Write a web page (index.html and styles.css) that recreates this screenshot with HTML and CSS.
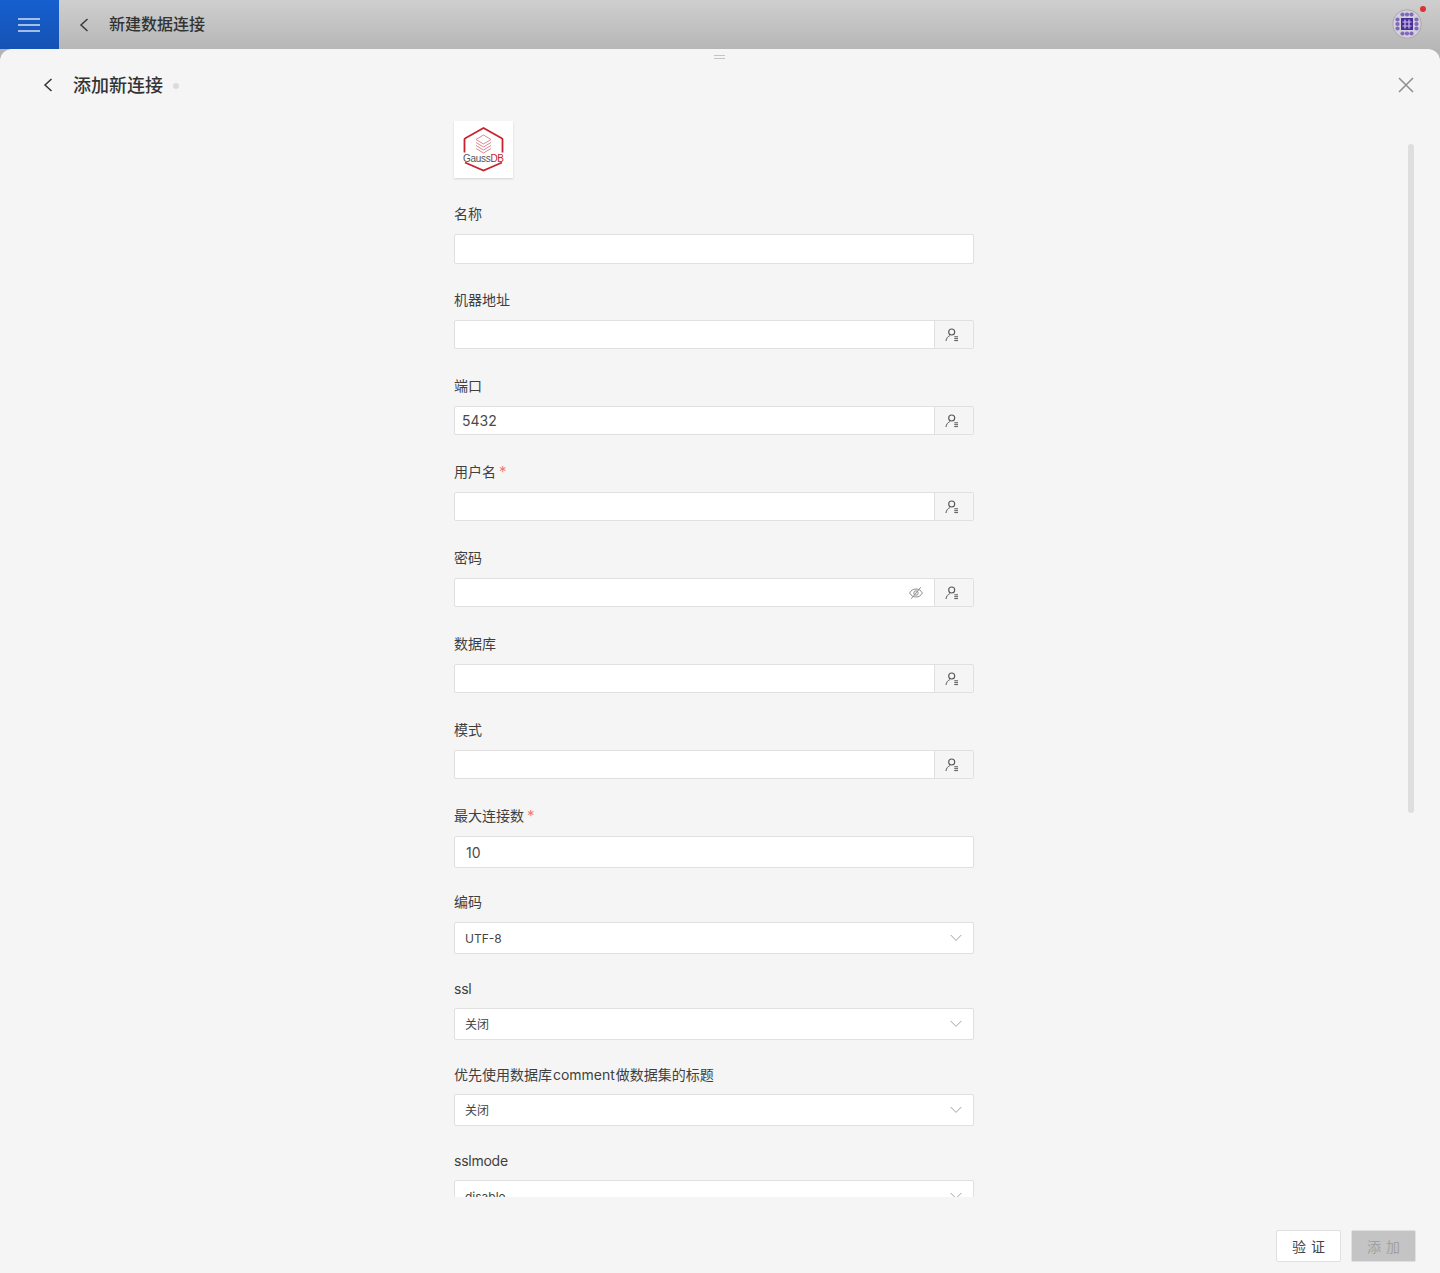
FILE: index.html
```html
<!DOCTYPE html>
<html lang="zh">
<head>
<meta charset="utf-8">
<title>添加新连接</title>
<link rel="stylesheet" href="styles.css">
</head>
<body>
<svg class="defs" width="0" height="0">
  <symbol id="user" viewBox="0 0 14 14">
    <circle cx="6.700" cy="4" r="3" fill="none" stroke="currentColor" stroke-width="1.100"/>
    <path d="M1 13c.3-2.600 1.700-4.500 3.900-5.400M9.300 8.800h3.700M9.300 10.700h3.700M9.300 12.600h3.700" fill="none" stroke="currentColor" stroke-width="1"/>
  </symbol>
  <symbol id="chev" viewBox="0 0 12 8">
    <path d="M.7 1l5.300 5.400L11.300 1" fill="none" stroke="currentColor" stroke-width="1"/>
  </symbol>
</svg>
<header class="topbar">
  <div class="menu-btn">
    <svg width="22" height="14" viewBox="0 0 22 14"><path d="M0 1h22M0 7h22M0 13h22" stroke="#d4dff2" stroke-width="1.500"/></svg>
  </div>
  <svg class="top-back" width="10" height="14" viewBox="0 0 10 14"><path d="M8.500 1L2 7l6.500 6" fill="none" stroke="#3a3a3a" stroke-width="1.500"/></svg>
  <div class="top-title">新建数据连接</div>
  <div class="avatar">
    <svg width="30" height="30" viewBox="0 0 30 30">
      <circle cx="15" cy="15" r="14.300" fill="#d2d1d8" stroke="#a9a9ad" stroke-width="1"/>
      <g fill="#8068bd">
        <circle cx="10.500" cy="5.500" r="2.100"/><circle cx="15" cy="5.500" r="2.100"/><circle cx="19.500" cy="5.500" r="2.100"/>
        <circle cx="10.500" cy="24.500" r="2.100"/><circle cx="15" cy="24.500" r="2.100"/><circle cx="19.500" cy="24.500" r="2.100"/>
        <circle cx="5.500" cy="10.500" r="2.100"/><circle cx="5.500" cy="15" r="2.100"/><circle cx="5.500" cy="19.500" r="2.100"/>
        <circle cx="24.500" cy="10.500" r="2.100"/><circle cx="24.500" cy="15" r="2.100"/><circle cx="24.500" cy="19.500" r="2.100"/>
      </g>
      <rect x="9" y="9" width="12" height="12" fill="#4a2f9c"/>
      <path d="M13 10.500v9M17 10.500v9M10.500 13h9M10.500 17h9" stroke="#c8bfe6" stroke-width="1.200"/>
    </svg>
    <span class="dot"></span>
  </div>
</header>
<main class="panel">
  <div class="handle"></div>
  <div class="panel-head">
    <svg class="head-back" width="10" height="14" viewBox="0 0 10 14"><path d="M8.500 1L2 7l6.500 6" fill="none" stroke="#333" stroke-width="1.500"/></svg>
    <h1 class="head-title">添加新连接</h1>
    <span class="head-dot"></span>
    <svg class="head-close" width="16" height="16" viewBox="0 0 16 16"><path d="M1 1l14 14M15 1L1 15" stroke="#8e8e8e" stroke-width="1.500"/></svg>
  </div>
  <div class="scroll-body">
    <form class="form">
      <div class="logo">
        <svg width="59" height="57" viewBox="0 0 59 57">
          <path d="M10.500 31.500V18.500a1.500 1.500 0 0 1 .8-1.300L29.500 7l18.200 10.200a1.500 1.500 0 0 1 .8 1.300V31.500" fill="none" stroke="#c8232c" stroke-width="1.800"/>
          <path d="M11 41.500L29.500 49.500 48 41.500" fill="none" stroke="#c8232c" stroke-width="1.800"/>
          <g fill="none" stroke="#de8a90" stroke-width="1">
            <path d="M29.500 14l7.500 4.500-7.500 4.500-7.500-4.500z"/>
            <path d="M22 21.500l7.500 4.500 7.500-4.500M22 24.500l7.500 4.500 7.500-4.500M22 27.500l7.500 4.500 7.500-4.500"/>
          </g>
          <text x="9" y="41" class="logo-gauss">Gauss<tspan class="logo-db">DB</tspan></text>
        </svg>
      </div>

      <div class="row"><label class="lbl">名称</label>
        <div class="field first"><input class="inp" type="text"></div></div>

      <div class="row"><label class="lbl">机器地址</label>
        <div class="field"><input class="inp" type="text"><span class="addon"><svg class="ico"><use href="#user"/></svg></span></div></div>

      <div class="row"><label class="lbl">端口</label>
        <div class="field"><input class="inp" type="text" value="5432"><span class="addon"><svg class="ico"><use href="#user"/></svg></span></div></div>

      <div class="row"><label class="lbl">用户名<span class="req">*</span></label>
        <div class="field"><input class="inp" type="text"><span class="addon"><svg class="ico"><use href="#user"/></svg></span></div></div>

      <div class="row"><label class="lbl">密码</label>
        <div class="field"><div class="inp pw">
          <svg width="14" height="14" viewBox="0 0 14 14"><path d="M.6 7C2 4.400 4.300 3 7 3s5 1.400 6.400 4C12 9.600 9.700 11 7 11S2 9.600.6 7z" fill="none" stroke="#8d8d8d"/><circle cx="7" cy="7" r="2.200" fill="none" stroke="#8d8d8d"/><path d="M2.300 12.700L11.700 1.300" stroke="#8d8d8d"/></svg>
        </div><span class="addon"><svg class="ico"><use href="#user"/></svg></span></div></div>

      <div class="row"><label class="lbl">数据库</label>
        <div class="field"><input class="inp" type="text"><span class="addon"><svg class="ico"><use href="#user"/></svg></span></div></div>

      <div class="row"><label class="lbl">模式</label>
        <div class="field"><input class="inp" type="text"><span class="addon"><svg class="ico"><use href="#user"/></svg></span></div></div>

      <div class="row"><label class="lbl">最大连接数<span class="req">*</span></label>
        <div class="field tall"><input class="inp num" type="text" value="10"></div></div>

      <div class="row"><label class="lbl">编码</label>
        <div class="select"><span>UTF-8</span><svg class="chev"><use href="#chev"/></svg></div></div>

      <div class="row"><label class="lbl latin tight">ssl</label>
        <div class="select"><span class="cjk">关闭</span><svg class="chev"><use href="#chev"/></svg></div></div>

      <div class="row"><label class="lbl latin spaced">优先使用数据库 comment 做数据集的标题</label>
        <div class="select"><span class="cjk">关闭</span><svg class="chev"><use href="#chev"/></svg></div></div>

      <div class="row"><label class="lbl latin tight">sslmode</label>
        <div class="select"><span>disable</span><svg class="chev"><use href="#chev"/></svg></div></div>
    </form>
    <div class="scrollbar"></div>
  </div>
  <footer class="foot">
    <button class="btn" type="button">验 证</button>
    <button class="btn disabled" type="button">添 加</button>
  </footer>
</main>
</body>
</html>
```
FILE: styles.css
```css
* { box-sizing: border-box; }
html, body { margin: 0; height: 100%; }
body {
  width: 1440px;
  height: 1273px;
  overflow: hidden;
  display: flex;
  flex-direction: column;
  background: #b4b4b4;
  color: #333;
  font-family: Inter, "Noto Sans CJK SC", sans-serif;
  font-size: 14px;
}
.defs { position: absolute; }

.topbar {
  height: 49px;
  flex: none;
  display: flex;
  align-items: center;
  background: linear-gradient(#cfcfcf, #b6b6b6);
}
.menu-btn {
  width: 59px;
  height: 49px;
  display: flex;
  align-items: center;
  justify-content: center;
  padding-right: 2px;
  background: linear-gradient(#155fcf, #1652b4);
}
.top-back { margin-left: 20px; }
.top-title {
  margin: 0 0 4px 20px;
  font-size: 16px;
  font-weight: 500;
  color: #333;
}
.avatar {
  position: relative;
  margin-left: auto;
  margin-right: 18px;
  width: 30px;
  height: 30px;
  margin-top: -2px;
}
.avatar svg { display: block; }
.dot {
  position: absolute;
  top: -3px;
  right: -4px;
  width: 6px;
  height: 6px;
  border-radius: 50%;
  background: #dc3232;
}

.panel {
  position: relative;
  flex: 1;
  min-height: 0;
  display: flex;
  flex-direction: column;
  background: #f5f5f5;
  border-radius: 12px 12px 0 0;
}
.handle {
  position: absolute;
  top: 6px;
  left: 714px;
  width: 11px;
  height: 4px;
  border-top: 1px solid #c4c4c4;
  border-bottom: 1px solid #c4c4c4;
}
.panel-head {
  height: 72px;
  flex: none;
  display: flex;
  align-items: center;
  padding: 0 26px 0 42px;
}
.head-back { margin-left: 1px; }
.head-title {
  margin: 0 0 2px 20px;
  font-size: 18px;
  font-weight: 500;
  color: #333;
}
.head-dot {
  margin-left: 10px;
  margin-top: 2px;
  width: 6px;
  height: 6px;
  border-radius: 50%;
  background: #dcdcdc;
}
.head-close { margin-left: auto; }

.scroll-body {
  position: relative;
  flex: 1;
  min-height: 0;
  overflow: hidden;
}
.scrollbar {
  position: absolute;
  top: 23px;
  right: 26px;
  width: 6px;
  height: 669px;
  border-radius: 3px;
  background: #dedede;
}
.form {
  width: 520px;
  margin-left: 454px;
}
.logo {
  width: 59px;
  height: 57px;
  margin-bottom: 26px;
  display: flex;
  background: #fff;
  box-shadow: 0 1px 2px rgba(0, 0, 0, .14);
}
.logo svg { display: block; }
.logo-gauss {
  font-family: "Liberation Sans", sans-serif;
  font-size: 10px;
  fill: #555;
  letter-spacing: -.3px;
}
.logo-db { fill: #c8232c; }

.row { height: 86px; }
.lbl {
  display: block;
  height: 20px;
  margin-bottom: 10px;
  line-height: 20px;
  font-size: 14px;
  color: #3f3f3f;
}
.lbl.latin { padding-top: 1px; }
.lbl.tight { letter-spacing: -.25px; }
.lbl.spaced { word-spacing: -3px; }
.req {
  margin-left: 3px;
  font-size: 15px;
  color: #f27a7a;
}
.field {
  display: flex;
  height: 29px;
  background: #fff;
  border: 1px solid #e0e0e0;
  border-radius: 2px;
}
.field.first { height: 30px; }
.field.tall { height: 32px; }
.inp {
  flex: 1;
  min-width: 0;
  height: 100%;
  padding: 0 7px;
  border: 0;
  outline: 0;
  background: transparent;
  font: 14px Inter, "Noto Sans CJK SC", sans-serif;
  color: #4a4a4a;
}
.inp.num { padding-left: 11px; }
.pw {
  display: flex;
  align-items: center;
  justify-content: flex-end;
  padding-right: 11px;
}
.addon {
  width: 39px;
  flex: none;
  display: flex;
  align-items: center;
  justify-content: center;
  padding-right: 5px;
  background: #f5f5f5;
  border-left: 1px solid #e0e0e0;
  color: #555;
}
.ico { width: 14px; height: 14px; }
.select {
  display: flex;
  align-items: center;
  justify-content: space-between;
  height: 32px;
  padding: 0 11px 0 10px;
  background: #fff;
  border: 1px solid #e0e0e0;
  border-radius: 2px;
  font-size: 12px;
  color: #444;
}
.cjk { margin-bottom: 2px; }
.chev { width: 12px; height: 8px; color: #a2a2a2; }

.foot {
  height: 76px;
  flex: none;
  display: flex;
  justify-content: flex-end;
  gap: 10px;
  padding: 33px 24px 0 0;
}
.btn {
  width: 65px;
  height: 32px;
  padding: 0;
  background: #fff;
  border: 1px solid #e0e0e0;
  border-radius: 2px;
  font: 14px "Noto Sans CJK SC", sans-serif;
  word-spacing: 2px;
  color: #444;
}
.btn.disabled {
  background: #c4c4c4;
  color: #a0a0a0;
}
```
